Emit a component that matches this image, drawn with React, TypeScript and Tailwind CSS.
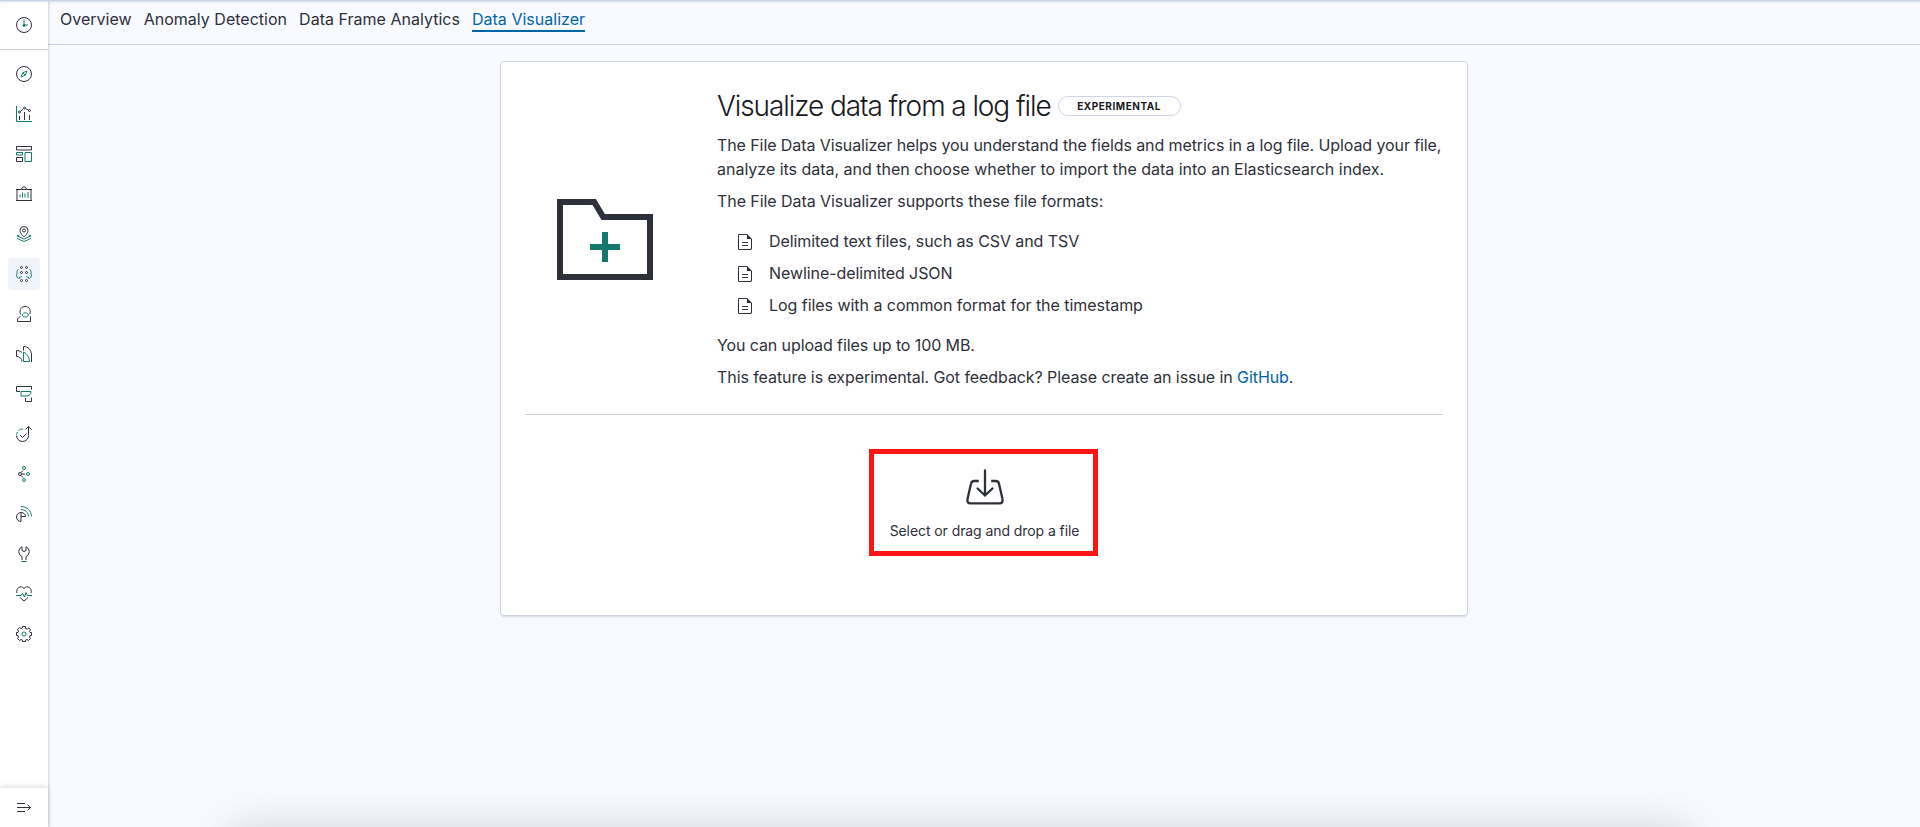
import type { ReactNode } from "react";

const DARK = "#2e303a";
const TEAL = "#15786c";

function AppIcon({ children }: { children: ReactNode }) {
  return (
    <svg width="16" height="16" viewBox="0 0 32 32" fill="none" stroke={DARK} strokeWidth="2" className="block">
      {children}
    </svg>
  );
}

const Recent = () => (
  <AppIcon>
    <circle cx="16" cy="16" r="15" />
    <path stroke={TEAL} d="M16 5v11h8" />
    <circle cx="16" cy="17" r="2" fill={TEAL} stroke={TEAL} />
  </AppIcon>
);

const Discover = () => (
  <AppIcon>
    <circle cx="16" cy="16" r="15" />
    <path stroke={TEAL} d="M22 10l-3.500 8.500L10 22l3.500-8.500z" />
    <path stroke={TEAL} d="M13.500 13.500l5 5" />
  </AppIcon>
);

const Visualize = () => (
  <AppIcon>
    <path stroke={TEAL} d="M1 0v31h31" />
    <path d="M7 20v8M17 12v16M27 18v10M8.500 11l6-5M19.500 5.500l5 2.500" />
    <circle cx="7" cy="12" r="2" />
    <circle cx="17" cy="4" r="2" />
    <circle cx="27" cy="9" r="2" />
  </AppIcon>
);

const Dashboard = () => (
  <AppIcon>
    <path d="M1 1h30v7H1zM1 23h12v8H1z" />
    <path stroke={TEAL} d="M1 13h12v5H1zM18 13h13v18H18z" />
  </AppIcon>
);

const Canvas = () => (
  <AppIcon>
    <path d="M0 7h32M0 29h32M2 7v22M30 7v22M10 7l4-5h4l4 5" />
    <path stroke={TEAL} d="M8 17v6M13 13v10M18 15v8M22 14h4M22 18h4M22 22h4" />
  </AppIcon>
);

const Maps = () => (
  <AppIcon>
    <path d="M16 22s-8-7-8-13a8 8 0 0116 0c0 6-8 13-8 13z" />
    <circle cx="16" cy="9" r="3" />
    <path stroke={TEAL} d="M7 18l-5 2 14 6 14-6-5-2M2 25l14 6 14-6" />
  </AppIcon>
);

const MachineLearning = () => (
  <AppIcon>
    <path stroke={TEAL} d="M5 7c-3 1-3 4-3 6-1 3-1 6 0 9 1 2 3 3 5 3M11 20c0 2-2 3-5 3M27 7c3 1 3 4 3 6 1 3 1 6 0 9-1 2-3 3-5 3M21 20c0 2 2 3 5 3" />
    <circle cx="11" cy="3" r="2" />
    <circle cx="21" cy="3" r="2" />
    <circle cx="11" cy="13" r="2" />
    <circle cx="21" cy="13" r="2" />
    <circle cx="11" cy="29" r="2" />
    <circle cx="21" cy="29" r="2" />
  </AppIcon>
);

const Siem = () => (
  <AppIcon>
    <path d="M9 17C6 6 11 1 18.500 1S30 6 28 16M9 20l-6 6v5h26V21" />
    <path stroke={TEAL} d="M12 18c2-6 11-6 13 0-1 2-3 4-6.500 4S13 20 12 18z" />
  </AppIcon>
);

const Metrics = () => (
  <AppIcon>
    <path d="M12 31C12 25 7 21 1 21V9c4 0 8 1 11 4M15 9V1c9 0 16 7 16 17v14" />
    <path stroke={TEAL} d="M15 12v19h12c0-9-5-16-12-19z" />
  </AppIcon>
);

const Logs = () => (
  <AppIcon>
    <path d="M31 7V1H1v10h7M19 24v7h12v-8" />
    <path stroke={TEAL} d="M10 11h20c0 6-4 9-10 9H10z" />
  </AppIcon>
);

const Uptime = () => (
  <AppIcon>
    <path d="M25 1v18a12 12 0 01-24 0M19 7l6-6 6 6M8 18l5 5 8-8" />
    <path stroke={TEAL} d="M1 17c0-2 1-4 2-5M5 9c2-2 5-3 9-3" />
  </AppIcon>
);

const Graph = () => (
  <AppIcon>
    <circle cx="8" cy="16" r="3" />
    <path d="M11 16h7M10 13l4-4M10 19l4 4" />
    <circle cx="16" cy="4" r="3" stroke={TEAL} />
    <circle cx="24" cy="16" r="3" stroke={TEAL} />
    <circle cx="16" cy="28" r="3" stroke={TEAL} />
  </AppIcon>
);

const Apm = () => (
  <AppIcon>
    <path d="M10 13a9 9 0 100 18V13c5 0 9 3 9 8H10" />
    <path stroke={TEAL} d="M10 7c8 0 15 6 15 14M10 1c12 0 21 9 21 20" />
  </AppIcon>
);

const DevTools = () => (
  <AppIcon>
    <path d="M12 28v-7a10.500 10.500 0 010-19.500V9l4 2 4-2V1.500A10.500 10.500 0 0120 21v7" />
    <path stroke={TEAL} d="M11 31h10" />
  </AppIcon>
);

const Monitoring = () => (
  <AppIcon>
    <path d="M2 14C-1 4 10-3 16 5c6-8 17-1 14 9M8 23l8 7 8-7" />
    <path stroke={TEAL} d="M0 19h10l3-4 4 7 3-9 3 6h9" />
  </AppIcon>
);

const Management = () => (
  <AppIcon>
    <path d="M13 1h6v4l4 1 3-2 3 4-2 3 1 2h3v6h-3l-1 3 2 3-4 4-3-2-3 1v3h-6v-3l-3-1-3 2-4-4 2-3-1-3H1v-6h3l1-3-2-3 4-4 3 2 3-1z" />
    <circle cx="16" cy="16" r="4" stroke={TEAL} />
  </AppIcon>
);

const ICONS = [
  Discover, Visualize, Dashboard, Canvas, Maps, MachineLearning, Siem,
  Metrics, Logs, Uptime, Graph, Apm, DevTools, Monitoring, Management,
];

function Sidebar() {
  return (
    <aside className="relative z-10 flex w-12 shrink-0 flex-col bg-white shadow-[1px_0_2px_rgba(120,130,170,0.35)]">
      <div className="flex h-[49px] items-center justify-center border-b border-[#cdd3e3]">
        <Recent />
      </div>
      <nav className="flex grow flex-col items-center gap-2 pt-2">
        {ICONS.map((Icon, i) => (
          <a
            key={i}
            className={
              i === 5
                ? "flex size-8 items-center justify-center rounded bg-[#f0f4f8]"
                : "flex size-8 items-center justify-center"
            }
          >
            <Icon />
          </a>
        ))}
      </nav>
      <div className="flex h-[39px] items-center justify-center bg-white pb-0.5 shadow-[0_-1px_5px_rgba(0,0,0,0.16)]">
        <svg width="16" height="16" viewBox="0 0 16 16" fill="none" stroke={DARK} className="block">
          <path d="M1 4.500h8M1 8.500h13.500M1 12.500h8M11.500 5.500l3 3-3 3" />
        </svg>
      </div>
    </aside>
  );
}

const TABS = ["Overview", "Anomaly Detection", "Data Frame Analytics", "Data Visualizer"];

function Tabs() {
  return (
    <header className="flex h-11 items-start gap-3 border-b border-[#c9d1e6] pt-1.5 pl-3 tracking-[0.018px]">
      {TABS.map((tab) => (
        <a
          key={tab}
          className={
            tab === "Data Visualizer"
              ? "h-[25px] border-b-2 border-[#0064aa] text-[#0064aa]"
              : "h-[25px]"
          }
        >
          {tab}
        </a>
      ))}
    </header>
  );
}

const FORMATS = [
  "Delimited text files, such as CSV and TSV",
  "Newline-delimited JSON",
  "Log files with a common format for the timestamp",
];

function FileIcon() {
  return (
    <svg width="16" height="16" viewBox="0 0 16 16" fill="none" stroke={DARK} className="mt-0.5 block">
      <path d="M10 .5H2a.5.5 0 00-.5.500v14a.5.5 0 00.5.500h12a.5.5 0 00.5-.500V5" />
      <path d="M10 0l5 5h-5z" fill={DARK} stroke="none" />
      <path d="M5 8.500h6M5 11.500h6" />
    </svg>
  );
}

function Welcome() {
  return (
    <section className="flex">
      <div className="flex w-[192px] shrink-0 items-center pl-8">
        <svg width="96" height="96" viewBox="0 0 32 32" fill="none" strokeWidth="2" className="mt-[6px] block">
          <path stroke={DARK} d="M1 3h11.400l3 5H31v20H1z" />
          <path stroke={TEAL} d="M16 13v10M11 18h10" />
        </svg>
      </div>
      <div className="flex-1">
        <div className="flex h-10 items-center">
          <h1 className="text-[28px] leading-10 font-light tracking-[-0.0385em] whitespace-nowrap text-[#17181d]">
            Visualize data from a log file
          </h1>
          <span className="ml-[7px] flex h-5 w-[123px] items-center justify-center rounded-full border border-[#cdd5e6] text-[10px] font-bold tracking-[0.055em] text-[#17181d]">
            EXPERIMENTAL
          </span>
        </div>
        <div className="mt-[7px] flex flex-col gap-2 whitespace-nowrap">
          <p>
            <span className="tracking-[-0.092px]">
              The File Data Visualizer helps you understand the fields and metrics in a log file. Upload your file,
            </span>
            <br />
            <span className="tracking-[-0.015px]">
              analyze its data, and then choose whether to import the data into an Elasticsearch index.
            </span>
          </p>
          <p className="tracking-[-0.065px]">The File Data Visualizer supports these file formats:</p>
          <ul className="my-2 flex flex-col gap-2">
            {FORMATS.map((format) => (
              <li key={format} className="flex items-center gap-4 pl-5">
                <FileIcon />
                <span className={format.startsWith("Log") ? "tracking-[-0.045px]" : ""}>{format}</span>
              </li>
            ))}
          </ul>
          <p className="tracking-[-0.1px]">You can upload files up to 100 MB.</p>
          <p className="tracking-[-0.075px]">
            This feature is experimental. Got feedback? Please create an issue in{" "}
            <a className="text-[#0064aa]">GitHub</a>.
          </p>
        </div>
      </div>
    </section>
  );
}

function FilePicker() {
  return (
    <div className="mx-auto mt-[34px] w-[231px] pr-0.5">
      <div className="flex h-[107px] flex-col items-center border-[5px] border-[#ff1414] pt-[14px]">
        <svg width="40" height="40" viewBox="0 0 40 40" fill="none" stroke={DARK} strokeWidth="2.300" strokeLinecap="round" className="ml-[3px] block">
          <path d="M13.800 13h-4.500q-2.800 0-3.300 2.800L2.500 31q-.800 4.300 3 4.300h29q3.800 0 3-4.300L34 15.800q-.5-2.800-3.300-2.800h-4.500" strokeLinecap="butt" />
          <path d="M20 2.500v25M12.600 20.500l7.400 7 7.400-7" />
        </svg>
        <span className="mt-[13px] pl-[3px] text-sm leading-5 whitespace-nowrap">Select or drag and drop a file</span>
      </div>
    </div>
  );
}

export default function App() {
  return (
    <div className="relative flex h-[827px] w-[1920px] flex-col overflow-hidden bg-[#f9faff] font-['Inter',sans-serif] text-base leading-6 tracking-[-0.005em] text-[#2e303a]">
      <div className="relative z-20 h-px shrink-0 bg-[#c9d3e6] shadow-[0_1px_2px_rgba(120,130,170,0.4)]" />
      <div className="flex min-h-0 grow">
        <Sidebar />
        <div className="flex grow flex-col">
          <Tabs />
          <main className="mt-4 ml-[452px] h-[555px] w-[968px] rounded border border-[#ccd4e4] bg-white px-6 pt-6 shadow-[0_2px_2px_-1px_rgba(152,162,179,0.4)]">
            <Welcome />
            <hr className="mt-[25px] border-[#cbd0e4]" />
            <FilePicker />
          </main>
        </div>
      </div>
      <div className="absolute top-[837px] left-[240px] h-10 w-[1440px] shadow-[0_0_44px_10px_rgba(0,0,0,0.15)]" />
    </div>
  );
}
